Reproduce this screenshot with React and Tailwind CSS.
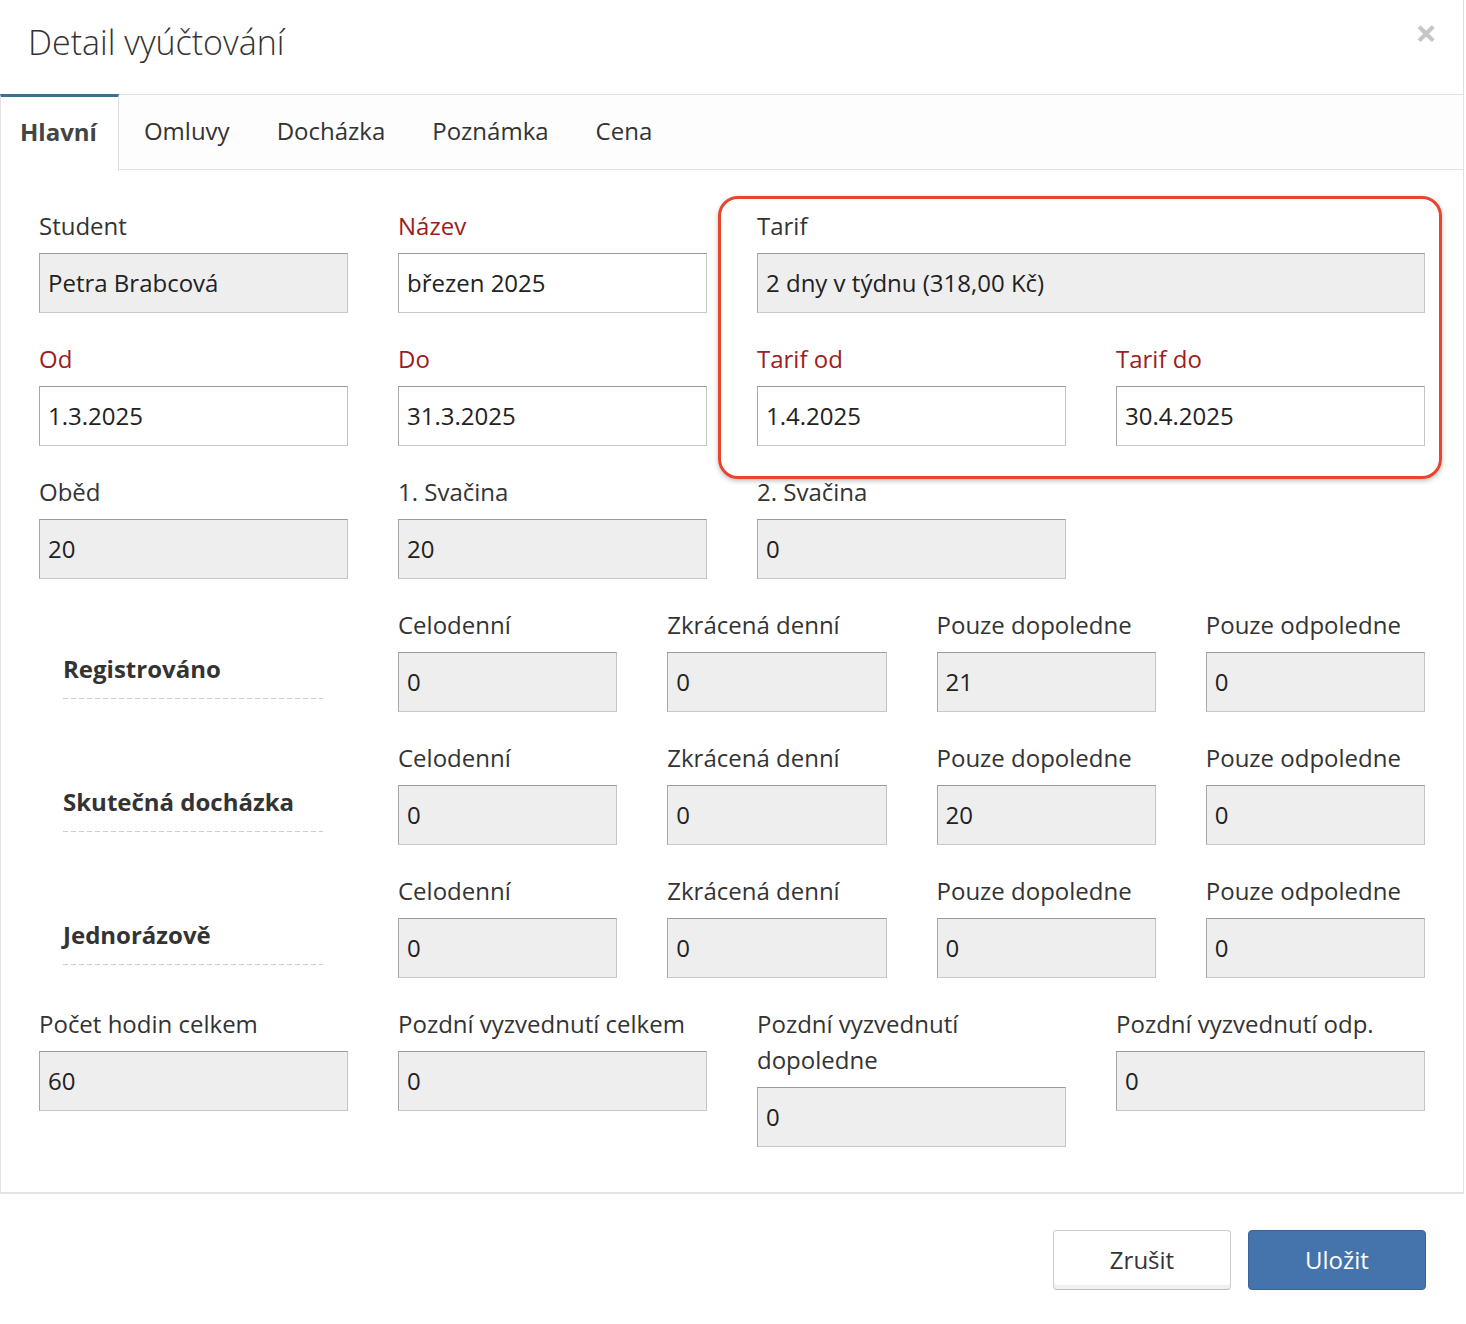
import React from "react";

const RED = "text-[#9e1c1c]";

function Field({ label, value, readOnly = true, red = false, className = "" }) {
  return (
    <div className={"flex flex-col mb-[28px] " + className}>
      <div className={"text-[24px] leading-[36px] mb-[9px] " + (red ? RED : "text-[#333]")}>{label}</div>
      <div
        className={
          "h-[60px] flex items-center px-[8px] text-[24px] text-[#222] border border-t-[#9a9a9a] border-l-[#a8a8a8] border-r-[#c4c4c4] border-b-[#c8c8c8] " +
          (readOnly ? "bg-[#eeeeee]" : "bg-white")
        }
      >
        {value}
      </div>
    </div>
  );
}

function Section({ title, values }) {
  const labels = ["Celodenní", "Zkrácená denní", "Pouze dopoledne", "Pouze odpoledne"];
  return (
    <div className="grid grid-cols-[309px_1fr] gap-x-[50px]">
      <div className="pl-[24px] pr-[25px]">
        <div className="mt-[44px] pb-[11px] text-[24px] leading-[36px] font-bold text-[#333]">{title}</div>
        <div className="h-px bg-[repeating-linear-gradient(to_right,#cccccc_0px,#cccccc_5px,transparent_5px,transparent_8px)]" />
      </div>
      <div className="grid grid-cols-4 gap-x-[50px]">
        {labels.map((l, i) => (
          <Field key={l} label={l} value={values[i]} />
        ))}
      </div>
    </div>
  );
}

export default function App() {
  const tabs = ["Omluvy", "Docházka", "Poznámka", "Cena"];
  return (
    <div className="w-[1466px] h-[1324px] bg-white font-['Open_Sans',sans-serif] text-[#333]">
      <div className="w-[1464px]">
        {/* Header */}
        <div className="h-[94px] flex justify-between border-r border-[#dedede]">
          <div className="pl-[28px] pt-[19px] text-[34px] leading-[46px] font-light text-[#333]">
            Detail vyúčtování
          </div>
          <div className="pr-[26px] pt-[14px] text-[38px] leading-[36px] font-bold text-[#c6c6c6]">×</div>
        </div>

        {/* Tabs */}
        <div className="h-[76px] flex border-t border-b border-l border-r border-[#e2e2e2] bg-[#fdfdfd]">
          <div className="relative -mt-px -mb-px -ml-px h-[77px] flex items-center pl-[20px] pr-[21px] pb-[5px] bg-white border-t-[3px] border-t-[#3a7191] border-l border-l-[#e2e2e2] border-r border-r-[#dcdcdc] text-[24px] font-bold text-[#444]">
            <span className="-ml-px">Hlavní</span>
          </div>
          <div className="flex ml-[5px] gap-[7px]">
            {tabs.map((t) => (
              <div key={t} className="flex items-center px-[20px] pb-[2px] text-[24px] text-[#333]">
                {t}
              </div>
            ))}
          </div>
        </div>

        {/* Body */}
        <div className="relative border-l border-r border-b-2 border-l-[#e2e2e2] border-r-[#e2e2e2] border-b-[#e4e4e4] pt-[38px] pb-[17px] pl-[38px] pr-[38px]">
          <div className="grid grid-cols-4 gap-x-[50px]">
            <Field label="Student" value="Petra Brabcová" />
            <Field label="Název" value="březen 2025" readOnly={false} red />
            <Field label="Tarif" value="2 dny v týdnu (318,00 Kč)" className="col-span-2" />

            <Field label="Od" value="1.3.2025" readOnly={false} red />
            <Field label="Do" value="31.3.2025" readOnly={false} red />
            <Field label="Tarif od" value="1.4.2025" readOnly={false} red />
            <Field label="Tarif do" value="30.4.2025" readOnly={false} red />

            <Field label="Oběd" value="20" />
            <Field label="1. Svačina" value="20" />
            <Field label="2. Svačina" value="0" />
            <div />
          </div>

          <Section title="Registrováno" values={["0", "0", "21", "0"]} />
          <Section title="Skutečná docházka" values={["0", "0", "20", "0"]} />
          <Section title="Jednorázově" values={["0", "0", "0", "0"]} />

          <div className="grid grid-cols-4 gap-x-[50px] items-start">
            <Field label="Počet hodin celkem" value="60" />
            <Field label="Pozdní vyzvednutí celkem" value="0" />
            <Field label={<>Pozdní vyzvednutí<br />dopoledne</>} value="0" />
            <Field label="Pozdní vyzvednutí odp." value="0" />
          </div>

          {/* annotation highlight */}
          <div className="absolute left-[717px] top-[26px] w-[724px] h-[283px] rounded-[20px] border-[3px] border-[#e8452f] shadow-[0_2px_5px_rgba(0,0,0,0.25)] pointer-events-none" />
        </div>

        {/* Footer */}
        <div className="flex justify-end gap-[17px] pt-[36px] pr-[38px]">
          <div className="w-[178px] h-[60px] flex items-center justify-center rounded-[4px] bg-white border border-[#cccccc] border-b-[#bdbdbd] shadow-[inset_0_-4px_0_#f0f0f0] text-[24px] text-[#333]">
            Zrušit
          </div>
          <div className="w-[178px] h-[60px] flex items-center justify-center rounded-[4px] bg-[#4573ab] border border-[#39649a] text-[24px] text-white">
            Uložit
          </div>
        </div>
      </div>
    </div>
  );
}
